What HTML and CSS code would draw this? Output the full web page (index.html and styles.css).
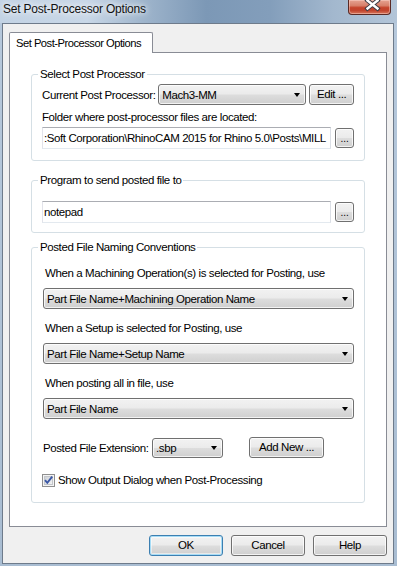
FILE: index.html
```html
<!DOCTYPE html>
<html>
<head>
<meta charset="utf-8">
<link rel="stylesheet" href="styles.css">
</head>
<body>
<div class="window">
  <div class="titlebar">
    <span class="title">Set Post-Processor Options</span>
    <div class="close">
      <svg width="43" height="15" viewBox="0 0 43 15">
        <path d="M19.5 1.5 L29.5 9.5 M29.5 1.5 L19.5 9.5" stroke="#3b3b44" stroke-width="4.4" stroke-linecap="square" fill="none"/>
        <path d="M19.5 1.5 L29.5 9.5 M29.5 1.5 L19.5 9.5" stroke="#ffffff" stroke-width="2.4" stroke-linecap="square" fill="none"/>
      </svg>
    </div>
  </div>
  <div class="client">
    <div class="tabs"><div class="tab">Set Post-Processor Options</div></div>
    <div class="panel">
      <fieldset class="group g1">
        <legend>Select Post Processor</legend>
        <div class="gbody">
          <div class="row r-post">
            <span class="lbl-post">Current Post Processor:</span>
            <div class="combo combo-post"><span class="combo-text">Mach3-MM</span><span class="arrow"></span></div>
            <div class="btn btn-edit">Edit ...</div>
          </div>
          <div class="label l-folder">Folder where post-processor files are located:</div>
          <div class="row r-input">
            <div class="textbox">:Soft Corporation\RhinoCAM 2015 for Rhino 5.0\Posts\MILL</div>
            <div class="btn btn-dots">...</div>
          </div>
        </div>
      </fieldset>
      <fieldset class="group g2">
        <legend>Program to send posted file to</legend>
        <div class="gbody">
          <div class="row r-input r-prog">
            <div class="textbox">notepad</div>
            <div class="btn btn-dots">...</div>
          </div>
        </div>
      </fieldset>
      <fieldset class="group g3">
        <legend>Posted File Naming Conventions</legend>
        <div class="gbody">
          <div class="label l-use l-first">When a Machining Operation(s) is selected for Posting, use</div>
          <div class="combo combo-wide"><span class="combo-text">Part File Name+Machining Operation Name</span><span class="arrow"></span></div>
          <div class="label l-use">When a Setup is selected for Posting, use</div>
          <div class="combo combo-wide"><span class="combo-text">Part File Name+Setup Name</span><span class="arrow"></span></div>
          <div class="label l-use">When posting all in file, use</div>
          <div class="combo combo-wide"><span class="combo-text">Part File Name</span><span class="arrow"></span></div>
          <div class="row r-ext">
            <span class="lbl-ext">Posted File Extension:</span>
            <div class="combo combo-ext"><span class="combo-text">.sbp</span><span class="arrow"></span></div>
            <div class="btn btn-add">Add New ...</div>
          </div>
          <div class="row r-check">
            <svg class="check" width="13" height="13" viewBox="0 0 13 13">
              <defs>
                <linearGradient id="cbg" x1="0" y1="0" x2="1" y2="1">
                  <stop offset="0" stop-color="#cbcfd5"/>
                  <stop offset="1" stop-color="#f6f6f6"/>
                </linearGradient>
              </defs>
              <rect x="0.5" y="0.5" width="12" height="12" fill="#f4f4f4" stroke="#8f8f8f"/>
              <rect x="2.5" y="2.5" width="8" height="8" fill="url(#cbg)" stroke="#c3c6cb"/>
              <path d="M3 6.2 L5.3 8.8 L10.2 2.6" stroke="#3b58a6" stroke-width="1.9" fill="none"/>
            </svg>
            <span>Show Output Dialog when Post-Processing</span>
          </div>
        </div>
      </fieldset>
    </div>
    <div class="buttons">
      <div class="btn btn-dlg btn-default">OK</div>
      <div class="btn btn-dlg">Cancel</div>
      <div class="btn btn-dlg">Help</div>
    </div>
  </div>
</div>
</body>
</html>
```

FILE: styles.css
```css
* { box-sizing: border-box; }
html, body { margin: 0; padding: 0; }
body {
  width: 397px;
  height: 566px;
  overflow: hidden;
  background: linear-gradient(180deg, #b7c9dc 0%, #a9bdd2 100%);
  font-family: "Liberation Sans", Arial, sans-serif;
  font-size: 11.5px;
  letter-spacing: -0.4px;
  color: #000;
}
.window { display: flex; flex-direction: column; height: 566px; }

.titlebar {
  height: 23px;
  display: flex;
  justify-content: space-between;
  align-items: flex-start;
  padding: 0 6px 0 3px;
  background: linear-gradient(90deg, #c3d3e4 0%, #c8d7e7 22%, #9fb5cc 36%, #7c98b6 52%, #839ebb 68%, #a3b8ce 84%, #b3c5d8 100%);
}
.title {
  font-family: "Liberation Sans", Arial, sans-serif;
  font-size: 12px;
  letter-spacing: -0.2px;
  line-height: 18px;
  color: #111;
  text-shadow: 0 0 5px #fff, 0 0 9px rgba(255,255,255,0.9);
}
.close {
  width: 43px;
  height: 15px;
  border: 1px solid #5a2a25;
  border-top: none;
  border-radius: 0 0 4px 4px;
  background: linear-gradient(180deg, #e6a392 0%, #d8806a 40%, #c5432b 55%, #c2452e 75%, #d7765c 100%);
  box-shadow: inset 0 0 0 1px rgba(255,220,210,0.45);
  overflow: hidden;
}
.close svg { display: block; margin: -1px 0 0 -1px; }

.client {
  flex: 1;
  margin: 0 3px 2px 2px;
  border: 1px solid #6e7b8b;
  background: #f0f0f0;
  padding: 8px 6px 0 6px;
  display: flex;
  flex-direction: column;
}
.tabs { display: flex; }
.tab {
  width: 144px;
  height: 21px;
  border: 1px solid #898c95;
  border-bottom: none;
  border-radius: 2px 2px 0 0;
  background: #fff;
  padding-left: 6px;
  font-size: 11.2px;
  letter-spacing: -0.5px;
  line-height: 20px;
  position: relative;
  z-index: 1;
  margin-bottom: -1px;
  white-space: nowrap;
}
.panel {
  height: 475px;
  border: 1px solid #898c95;
  background: #fff;
  padding: 0 21px;
  display: flex;
  flex-direction: column;
}

.group {
  margin: 0;
  padding: 0;
  min-width: 0;
  border: 1px solid #d5dfe5;
  border-radius: 3px;
}
.group legend {
  padding: 0 2px;
  margin-left: 6px;
  line-height: 14px;
  font-size: 11.5px;
}
.gbody { padding: 0 10px; }
.g1 { margin-top: 14px; }
.g1 .gbody { padding-top: 3px; padding-bottom: 11px; }
.g2 { margin-top: 12px; }
.g2 .gbody { padding-top: 14px; padding-bottom: 9px; }
.g3 { margin-top: 7px; }
.g3 .gbody { padding-bottom: 14px; }

.row { display: flex; align-items: center; }
.label { line-height: 15px; white-space: nowrap; }
.lbl-post { width: 117px; white-space: nowrap; }
.l-folder { margin-top: 5px; }
.r-input { margin-top: 2px; gap: 4px; }
.r-prog { margin-top: 0; }

.textbox {
  width: 291px;
  height: 22px;
  border: 1px solid #dbdfe6;
  border-top-color: #abadb3;
  border-left-color: #e2e3ea;
  border-bottom-color: #e3e9ef;
  background: #fff;
  padding-left: 1px;
  line-height: 20px;
  white-space: nowrap;
  overflow: hidden;
}

.btn {
  border: 1px solid #707070;
  border-radius: 3px;
  background: linear-gradient(180deg, #f2f2f2 0%, #ebebeb 48%, #dddddd 52%, #cfcfcf 100%);
  box-shadow: inset 0 0 0 1px rgba(255,255,255,0.75);
  text-align: center;
  white-space: nowrap;
}
.btn-edit { width: 45px; height: 21px; line-height: 19px; margin-left: 3px; }
.btn-dots { width: 19px; height: 20px; line-height: 20px; font-size: 10px; letter-spacing: 0; }
.btn-add { width: 75px; height: 21px; line-height: 19px; margin-left: 26px; }

.combo {
  display: flex;
  align-items: center;
  height: 21px;
  border: 1px solid #707070;
  border-radius: 3px;
  background: linear-gradient(180deg, #f2f2f2 0%, #ebebeb 48%, #dddddd 52%, #cfcfcf 100%);
  box-shadow: inset 0 0 0 1px rgba(255,255,255,0.75);
  padding: 0 5px 0 3px;
  white-space: nowrap;
}
.combo-text { flex: 1; overflow: hidden; }
.arrow {
  width: 0; height: 0;
  border-left: 3.5px solid transparent;
  border-right: 3.5px solid transparent;
  border-top: 4px solid #000;
}
.combo-post { width: 149px; }
.combo-wide { width: 311px; margin-left: 1px; margin-top: 7px; }
.l-use { padding-left: 3px; margin-top: 12px; }
.combo-ext { width: 71px; height: 20px; }
.lbl-ext { width: 110px; padding-left: 1px; white-space: nowrap; }
.r-ext { margin-top: 18px; }
.r-check { margin-top: 15px; line-height: 15px; }
.check { display: block; margin-right: 3px; flex: none; }

.buttons {
  display: flex;
  justify-content: flex-end;
  gap: 8px;
  margin-top: 8px;
}
.btn-dlg { width: 74px; height: 21px; line-height: 19px; }
.btn-default {
  border-color: #3c7fb1;
  box-shadow: inset 0 0 0 1px #a6dcf6, inset 0 0 0 2px rgba(255,255,255,0.5);
}
```
